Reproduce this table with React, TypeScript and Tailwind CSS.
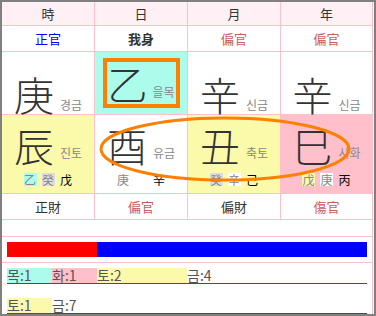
const FONT = { fontFamily: '"Noto Sans CJK KR", "Noto Sans CJK SC", sans-serif' };

type Stem = { ch: string; bg?: string; strong?: boolean };

const heads = ["時", "日", "月", "年"];

const gods = [
  { t: "正官", c: "text-[#0000ff]" },
  { t: "我身", c: "text-[#333] font-bold" },
  { t: "偏官", c: "text-[#cd5c5c]" },
  { t: "偏官", c: "text-[#cd5c5c]" },
];

const stems = [
  { ch: "庚", ko: "경금", bg: "bg-white" },
  { ch: "乙", ko: "을목", bg: "bg-[#acfcec]", me: true },
  { ch: "辛", ko: "신금", bg: "bg-white" },
  { ch: "辛", ko: "신금", bg: "bg-white" },
];

const branches: { ch: string; ko: string; bg: string; hidden: (Stem | null)[] }[] = [
  {
    ch: "辰",
    ko: "진토",
    bg: "bg-[#fbf9aa]",
    hidden: [{ ch: "乙", bg: "bg-[#acfcec]" }, { ch: "癸", bg: "bg-[#dcdcdc]" }, { ch: "戊", strong: true }],
  },
  { ch: "酉", ko: "유금", bg: "bg-white", hidden: [{ ch: "庚" }, null, { ch: "辛", strong: true }] },
  {
    ch: "丑",
    ko: "축토",
    bg: "bg-[#fbf9aa]",
    hidden: [{ ch: "癸", bg: "bg-[#dcdcdc]" }, { ch: "辛", bg: "bg-white" }, { ch: "己", strong: true }],
  },
  {
    ch: "巳",
    ko: "사화",
    bg: "bg-[#ffc0cb]",
    hidden: [{ ch: "戊", bg: "bg-[#fbf9aa]" }, { ch: "庚", bg: "bg-white" }, { ch: "丙", strong: true }],
  },
];

const gods2 = [
  { t: "正財", c: "text-[#333]" },
  { t: "偏官", c: "text-[#cd5c5c]" },
  { t: "偏財", c: "text-[#333]" },
  { t: "傷官", c: "text-[#cd5c5c]" },
];

const elemRows = [
  [
    { t: "목:1", n: 1, bg: "#acfcec" },
    { t: "화:1", n: 1, bg: "#ffc0cb" },
    { t: "토:2", n: 2, bg: "#fbf9aa" },
    { t: "금:4", n: 4, bg: "#ffffff" },
  ],
  [
    { t: "토:1", n: 1, bg: "#fbf9aa" },
    { t: "금:7", n: 7, bg: "#ffffff" },
  ],
];

const cols = "grid grid-cols-[93px_93px_93px_92px]";
const cell = "border-r border-b border-[#ffc0cb]";

export default function App() {
  return (
    <div className="relative w-[376px] h-[316px] bg-white" style={FONT}>
      <div className="w-[376px] h-[316px] border-2 border-[#808080] pr-px">
        {/* 천간 헤더 */}
        <div className={cols}>
          {heads.map((h) => (
            <div key={h} className={`${cell} h-[24px] bg-[#fff0f5] flex items-center justify-center text-[13px] text-[#333]`}>
              {h}
            </div>
          ))}
          {gods.map((g, i) => (
            <div key={i} className={`${cell} h-[26px] flex items-center justify-center text-[13px] ${g.c}`}>
              {g.t}
            </div>
          ))}
          {stems.map((s, i) => (
            <div key={i} className={`${cell} h-[63px] ${s.bg} flex justify-center`}>
              {s.me ? (
                <div className="mt-[6px] w-[77px] h-[50px] border-4 border-[#ff8000] flex items-center justify-center gap-[5px]">
                  <span className="text-[40px] leading-none text-[#333] font-light">{s.ch}</span>
                  <span className="self-end mb-[6px] text-[12px] leading-none text-[#888]">{s.ko}</span>
                </div>
              ) : (
                <div className="pt-[9px] flex items-end">
                  <span className="text-[40px] leading-none text-[#333] font-light">{s.ch}</span>
                  <span className="ml-[6px] mb-[3px] text-[12px] leading-none text-[#888]">{s.ko}</span>
                </div>
              )}
            </div>
          ))}
          {branches.map((b, i) => (
            <div key={i} className={`${cell} h-[79px] ${b.bg} flex flex-col items-center pt-[10px]`}>
              <div className="flex items-end">
                <span className="text-[40px] leading-none text-[#333] font-light">{b.ch}</span>
                <span className="ml-[6px] mb-[6px] text-[12px] leading-none text-[#888]">{b.ko}</span>
              </div>
              <div className="mt-[8px] flex gap-[5px]">
                {b.hidden.map((h, j) => (
                  <span
                    key={j}
                    className={`w-[13px] h-[13px] flex items-center justify-center text-[12px] leading-none ${h?.bg ?? ""} ${
                      h?.strong ? "text-black" : "text-[#888]"
                    }`}
                  >
                    {h?.ch ?? ""}
                  </span>
                ))}
              </div>
            </div>
          ))}
          {gods2.map((g, i) => (
            <div key={i} className={`${cell} h-[26px] flex items-center justify-center text-[13px] ${g.c}`}>
              {g.t}
            </div>
          ))}
        </div>

        <div className={`${cell} h-[17px]`} />

        {/* 음양 막대 */}
        <div className={`${cell} h-[26px] pt-[5px] pl-[5px]`}>
          <div className="flex w-[360px] h-[15px]">
            <div className="w-[90px] bg-[#ff0000]" />
            <div className="flex-1 bg-[#0000ff]" />
          </div>
        </div>

        {/* 오행 분포 */}
        <div className="border-r border-[#ffc0cb] h-[51px] pt-[5px] pl-[5px] flex flex-col gap-[14px]">
          {elemRows.map((row, r) => (
            <div key={r} className="flex w-[360px] h-[16px] border-b border-[#008000]">
              {row.map((e) => (
                <div
                  key={e.t}
                  className="h-[15px] text-[14px] leading-[15px] text-[#555]"
                  style={{ width: e.n * 45, background: e.bg }}
                >
                  {e.t}
                </div>
              ))}
            </div>
          ))}
        </div>
      </div>

      <svg className="absolute left-0 top-0 pointer-events-none" width="376" height="316">
        <ellipse cx="225" cy="149" rx="124" ry="31" fill="none" stroke="#ff8000" strokeWidth="3" />
      </svg>
    </div>
  );
}
